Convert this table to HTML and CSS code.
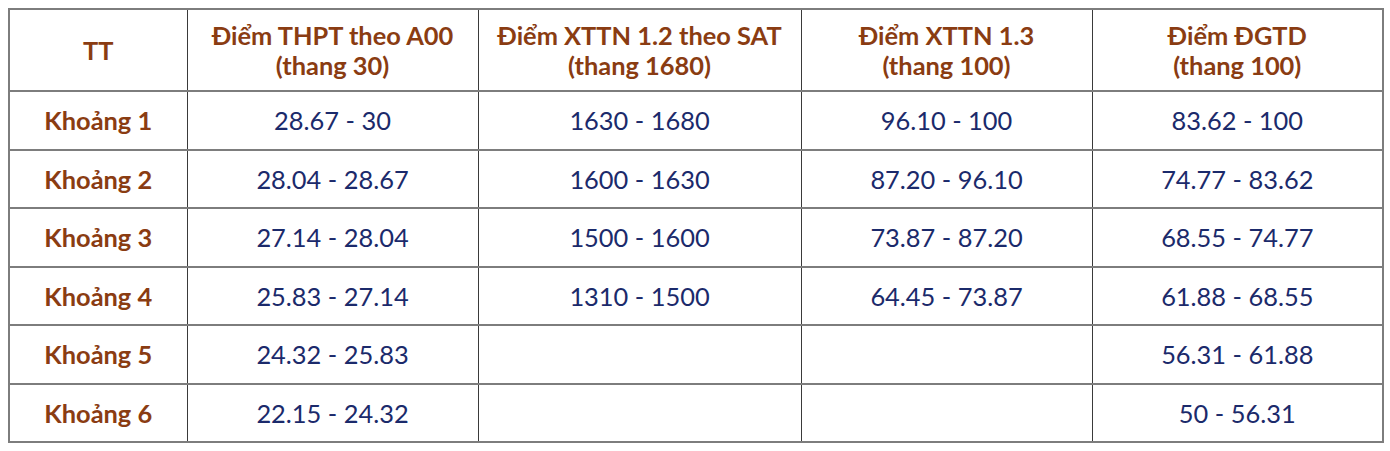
FILE: index.html
```html
<!DOCTYPE html>
<html lang="vi">
<head>
<meta charset="utf-8">
<link rel="stylesheet" href="styles.css">
</head>
<body>
<table class="score-table">
  <colgroup>
    <col class="c-tt"><col class="c-a"><col class="c-b"><col class="c-c"><col class="c-d">
  </colgroup>
  <thead>
    <tr class="head-row">
      <th>TT</th>
      <th>Điểm THPT theo A00<br>(thang 30)</th>
      <th>Điểm XTTN 1.2 theo SAT<br>(thang 1680)</th>
      <th>Điểm XTTN 1.3<br>(thang 100)</th>
      <th>Điểm ĐGTD<br>(thang 100)</th>
    </tr>
  </thead>
  <tbody>
    <tr><th>Khoảng 1</th><td>28.67 - 30</td><td>1630 - 1680</td><td>96.10 - 100</td><td>83.62 - 100</td></tr>
    <tr><th>Khoảng 2</th><td>28.04 - 28.67</td><td>1600 - 1630</td><td>87.20 - 96.10</td><td>74.77 - 83.62</td></tr>
    <tr><th>Khoảng 3</th><td>27.14 - 28.04</td><td>1500 - 1600</td><td>73.87 - 87.20</td><td>68.55 - 74.77</td></tr>
    <tr><th>Khoảng 4</th><td>25.83 - 27.14</td><td>1310 - 1500</td><td>64.45 - 73.87</td><td>61.88 - 68.55</td></tr>
    <tr><th>Khoảng 5</th><td>24.32 - 25.83</td><td></td><td></td><td>56.31 - 61.88</td></tr>
    <tr><th>Khoảng 6</th><td>22.15 - 24.32</td><td></td><td></td><td>50 - 56.31</td></tr>
  </tbody>
</table>
</body>
</html>
```
FILE: styles.css
```css
html, body {
  margin: 0;
  padding: 0;
  background: #ffffff;
}
body {
  padding: 8px;
  font-family: Lato, "Noto Sans", sans-serif;
}
.score-table {
  border-collapse: collapse;
  width: 1374px;
  table-layout: fixed;
  border: 2px solid #7d7d7d;
}
.c-tt { width: 178px; }
.c-a { width: 291px; }
.c-b { width: 323px; }
.c-c { width: 291px; }
.c-d { width: 291px; }
.score-table th,
.score-table td {
  border-left: 1px solid #3a3a3a;
  border-right: 1px solid #3a3a3a;
  border-top: 2px solid #7d7d7d;
  border-bottom: 2px solid #7d7d7d;
  text-align: center;
  vertical-align: middle;
  padding: 0;
  font-size: 25.4px;
}
.score-table th {
  color: #8a3c12;
  font-weight: 700;
}
.score-table td {
  color: #1b2a6b;
  font-weight: 400;
}
.head-row th {
  height: 80px;
  line-height: 30px;
}
.score-table tbody tr {
  height: 58.5px;
}
```
